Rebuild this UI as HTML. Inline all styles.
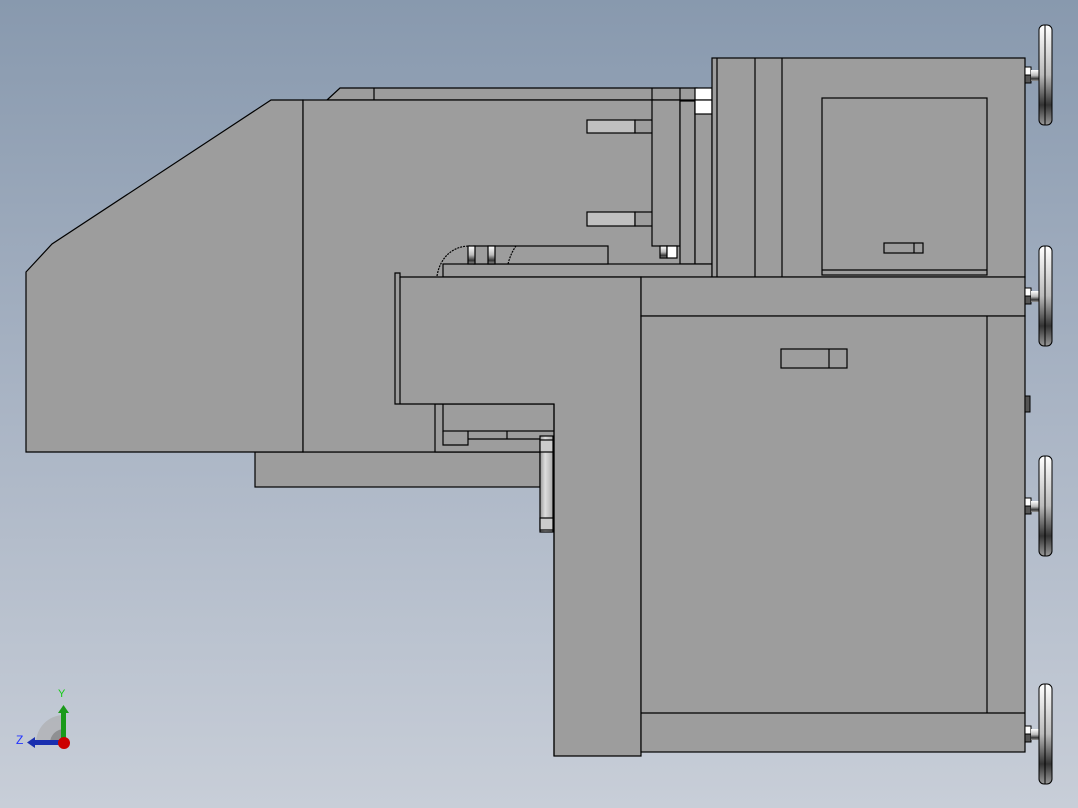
<!DOCTYPE html>
<html><head><style>
html,body{margin:0;padding:0;width:1078px;height:808px;overflow:hidden}
body{background:linear-gradient(#8899ae,#a9b4c4 50%,#c8ced8)}
svg{position:absolute;left:0;top:0}
</style></head><body>
<svg width="1078" height="808" viewBox="0 0 1078 808">
<defs>
<linearGradient id="fv" x1="0" x2="0" y1="0" y2="1"><stop offset="0" stop-color="#fff"/><stop offset=".5" stop-color="#bbb"/><stop offset=".8" stop-color="#333"/><stop offset="1" stop-color="#999"/></linearGradient>
<linearGradient id="tb" x1="0" x2="1"><stop offset="0" stop-color="#999"/><stop offset=".4" stop-color="#ddd"/><stop offset="1" stop-color="#aaa"/></linearGradient>
</defs>
<g fill="#9d9d9d" stroke="#000" stroke-width="1.2">
<rect x="255" y="452" width="285" height="35"/>
<polygon points="327,100 340,88 697,88 697,100"/>
<line x1="374" y1="88" x2="374" y2="100"/>
<line x1="652" y1="88" x2="652" y2="100"/><line x1="680" y1="88" x2="680" y2="100"/>
<polygon points="26,272 52,244 271,100 303,100 303,452 26,452"/>
<rect x="303" y="100" width="350" height="352"/>
<rect x="600" y="240" width="112" height="26" stroke="none"/>
<rect x="435" y="404" width="120" height="48"/>
<rect x="443" y="404" width="112" height="27"/>
<path d="M443 431 V445 H468 V431 M468 439 H548 M507 431 V439" fill="none"/>
<rect x="587" y="120" width="48" height="13" fill="#c0c0c0"/><rect x="635" y="120" width="18" height="13"/>
<rect x="587" y="212" width="48" height="14" fill="#c0c0c0"/><rect x="635" y="212" width="18" height="14"/>
<rect x="652" y="100" width="28" height="146"/>
<rect x="680" y="101" width="15" height="163"/>
<rect x="695" y="100" width="17" height="164"/>
<rect x="695" y="88" width="17" height="12" fill="#fff"/><rect x="695" y="100" width="17" height="14" fill="#fff"/>
<rect x="443" y="264" width="269" height="13"/>
<rect x="474" y="246" width="134" height="18"/>
<path d="M437 276 C440 258 452 246 470 246" fill="none" stroke-dasharray="2,1"/>
<path d="M508 264 C510 256 513 250 516 246" fill="none" stroke-dasharray="2,1"/>
<rect x="468" y="246" width="7" height="18" fill="url(#fv)"/><rect x="488" y="246" width="7" height="18" fill="url(#fv)"/>
<rect x="660" y="246" width="7" height="12" fill="url(#fv)"/><rect x="667" y="246" width="10" height="12" fill="#fff"/>
<rect x="712" y="58" width="313" height="219"/>
<line x1="717" y1="58" x2="717" y2="277"/><line x1="755" y1="58" x2="755" y2="277"/><line x1="782" y1="58" x2="782" y2="277"/>
<rect x="822" y="98" width="165" height="177"/><line x1="822" y1="270" x2="987" y2="270"/>
<rect x="884" y="243" width="39" height="10"/><line x1="914" y1="243" x2="914" y2="253"/>
<polygon points="395,273 400,273 400,277 641,277 641,756 554,756 554,404 395,404"/>
<line x1="400" y1="277" x2="400" y2="404"/><line x1="554" y1="404" x2="554" y2="756"/>
<rect x="641" y="277" width="384" height="39"/>
<rect x="641" y="316" width="384" height="436"/>
<line x1="987" y1="316" x2="987" y2="713"/><line x1="641" y1="713" x2="1025" y2="713"/>
<rect x="781" y="349" width="66" height="19"/><line x1="829" y1="349" x2="829" y2="368"/>
<rect x="540" y="436" width="13" height="96" fill="url(#tb)"/>
<rect x="540" y="440" width="13" height="12" fill="#ccc"/><rect x="540" y="518" width="13" height="12" fill="#ccc"/>
</g>
<g stroke="#000" stroke-width="1">
<g id="f">
<rect x="1025" y="67" width="6" height="8" fill="#fff"/><rect x="1025" y="75" width="6" height="8" fill="#555"/>
<rect x="1031" y="70" width="8" height="11" fill="url(#fv)" stroke="none"/>
<rect x="1039" y="25" width="13" height="100" rx="5" fill="url(#fv)"/>
<line x1="1045" y1="25" x2="1045" y2="125"/>
</g>
<use href="#f" y="221"/><use href="#f" y="431"/><use href="#f" y="659"/>
<rect x="1025" y="396" width="5" height="16" fill="#555"/>
</g>
<path d="M36 743 A28 28 0 0 1 64 715 V743Z" fill="#aaa" opacity=".6"/>
<path d="M50 743 A14 14 0 0 1 64 729 V743Z" fill="#777" opacity=".6"/>
<rect x="61" y="712" width="5" height="31" fill="#1a9a1a"/><polygon points="58,713 63.5,705 69,713" fill="#1a9a1a"/>
<rect x="34" y="740" width="28" height="5" fill="#1a2fb0"/><polygon points="35,737 27,742.5 35,748" fill="#1a2fb0"/>
<circle cx="64" cy="743" r="6" fill="#c00"/>
<text x="58" y="697" font-family="Liberation Sans,sans-serif" font-size="11" fill="#1c1">Y</text>
<text x="16" y="744" font-family="Liberation Sans,sans-serif" font-size="12" fill="#23f">Z</text>
</svg>
</body></html>
